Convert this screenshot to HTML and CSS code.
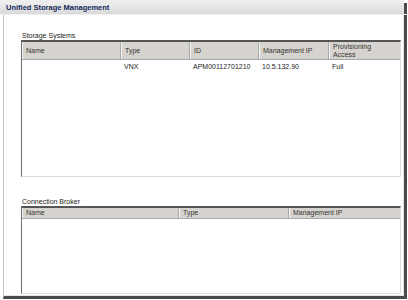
FILE: index.html
```html
<!DOCTYPE html>
<html>
<head>
<meta charset="utf-8">
<link rel="stylesheet" href="styles.css">
</head>
<body>
<div class="window">
  <div class="titlebar">Unified Storage Management</div>
  <div class="frame">
    <div class="group group-storage">
      <div class="label">Storage Systems</div>
      <div class="table table-storage">
        <div class="thead cols5">
          <div class="th">Name</div>
          <div class="th">Type</div>
          <div class="th">ID</div>
          <div class="th">Management IP</div>
          <div class="th two">Provisioning<br>Access</div>
        </div>
        <div class="tbody">
          <div class="tr cols5">
            <div class="td"></div>
            <div class="td">VNX</div>
            <div class="td">APM00112701210</div>
            <div class="td">10.5.132.90</div>
            <div class="td">Full</div>
          </div>
        </div>
      </div>
    </div>
    <div class="group group-broker">
      <div class="label">Connection Broker</div>
      <div class="table table-broker">
        <div class="thead cols3 short">
          <div class="th">Name</div>
          <div class="th">Type</div>
          <div class="th">Management IP</div>
        </div>
        <div class="tbody"></div>
      </div>
    </div>
  </div>
</div>
</body>
</html>
```

FILE: styles.css
```css
html, body {
  margin: 0;
  padding: 0;
  background: #ffffff;
}
body {
  width: 408px;
  height: 300px;
  overflow: hidden;
  font-family: "Liberation Sans", Arial, sans-serif;
  font-size: 7px;
  color: #222222;
}
.window {
  display: flex;
  flex-direction: column;
  width: 408px;
  height: 299px;
}
.titlebar {
  height: 14px;
  line-height: 15px;
  padding-left: 6px;
  font-weight: bold;
  font-size: 7.5px;
  color: #14285a;
  background: linear-gradient(#f0f0f0, #d9d9d9);
  border-bottom: 1px solid #b4b4b4;
  border-right: 3px solid #4a4a4a;
  border-image: linear-gradient(#ffffff 0, #ffffff 3px, #4a4a4a 3px) 0 1;
  border-image-slice: 0 3 0 0;
  margin-right: 1px;
}
.frame {
  flex: 1;
  margin-left: 3px;
  margin-right: 1px;
  border-left: 1px solid #c4c4c4;
  border-right: 3px solid #4a4a4a;
  border-bottom: 3px solid #4a4a4a;
  box-shadow: inset -1px -1px 0 #e4e4e4;
  padding: 0 3px 0 17px;
  display: flex;
  flex-direction: column;
}
.label {
  height: 9px;
  line-height: 9px;
  padding-left: 1px;
}
.group-storage {
  padding-top: 16px;
}
.group-broker {
  padding-top: 20px;
  flex: 1;
  display: flex;
  flex-direction: column;
  padding-bottom: 2px;
}
.table {
  display: flex;
  flex-direction: column;
  border-top: 2px solid #555555;
  border-left: 1px solid #6e6e6e;
  border-right: 1px solid #dcdcdc;
  border-bottom: 1px solid #dcdcdc;
  box-shadow: inset 1px 0 0 #a0a0a0;
}
.table-storage {
  height: 134px;
}
.table-broker {
  flex: 1;
}
.thead {
  display: grid;
  background: #d6d3ce;
  border-bottom: 1px solid #a8a8a8;
  height: 17px;
}
.thead.short {
  height: 10px;
}
.cols5 {
  display: grid;
  grid-template-columns: 99px 69px 69px 70px 1fr;
}
.cols3 {
  grid-template-columns: 157px 110px 1fr;
}
.th {
  display: flex;
  align-items: center;
  padding-left: 4px;
  border-right: 1px solid #a8a8a8;
  box-shadow: inset 1px 0 0 #f4f4f4;
  color: #333333;
  line-height: 8px;
}
.th:last-child {
  border-right: none;
}
.th.two {
  padding-top: 1px;
}
.tbody {
  flex: 1;
  background: #ffffff;
}
.tr {
  height: 14px;
  align-items: center;
}
.td {
  padding-left: 3px;
  line-height: 14px;
  white-space: nowrap;
}
```
